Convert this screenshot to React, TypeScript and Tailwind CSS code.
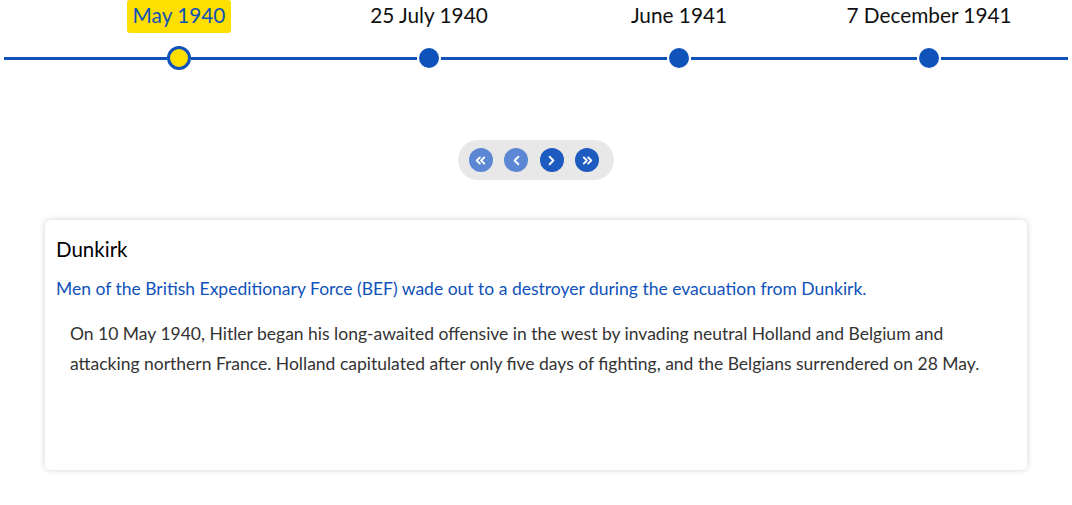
import { ChevronLeft, ChevronRight, ChevronsLeft, ChevronsRight } from "lucide-react";

const items = ["May 1940", "25 July 1940", "June 1941", "7 December 1941"];

export default function App() {
  return (
    <div className="w-[1072px] h-[505px] bg-white font-['Lato',sans-serif] text-[#222]">
      {/* timeline */}
      <div className="flex items-end pl-[4px] pr-[4px]">
        <div className="w-[50px] h-[3px] bg-[#0f52ba] mb-[21px]" />
        {items.map((label, i) => (
          <div key={label} className="w-[250px] flex flex-col items-center">
            <div
              className={`h-[33px] px-[6px] pb-[3px] rounded-[3px] flex items-center text-[20.8px] ${
                i === 0 ? "bg-[#ffdf00] text-[#0f52ba]" : "text-[#111]"
              }`}
            >
              {label}
            </div>
            <div className="w-full h-[48px] pt-[2px] flex items-center">
              <div className="flex-1 h-[3px] bg-[#0f52ba]" />
              {i === 0 ? (
                <div className="w-[24px] h-[24px] rounded-full bg-[#ffdf00] border-[3px] border-[#0f52ba]" />
              ) : (
                <div className="w-[20px] h-[20px] rounded-full bg-[#0f52ba] mx-[2px]" />
              )}
              <div className="flex-1 h-[3px] bg-[#0f52ba]" />
            </div>
          </div>
        ))}
        <div className="flex-1 h-[3px] bg-[#0f52ba] mb-[21px]" />
      </div>

      {/* controls */}
      <div className="flex justify-center mt-[59px]">
        <div className="flex items-center gap-[11.5px] h-[40px] pl-[11px] pr-[15px] rounded-full bg-[#e8e8e8]">
          <button className="w-[24px] h-[24px] rounded-full bg-[#5b87d4] text-white flex items-center justify-center">
            <ChevronsLeft size={15} strokeWidth={3} />
          </button>
          <button className="w-[24px] h-[24px] rounded-full bg-[#5b87d4] text-white flex items-center justify-center">
            <ChevronLeft size={15} strokeWidth={3} />
          </button>
          <button className="w-[24px] h-[24px] rounded-full bg-[#1d5bc0] text-white flex items-center justify-center">
            <ChevronRight size={15} strokeWidth={3} />
          </button>
          <button className="w-[24px] h-[24px] rounded-full bg-[#1d5bc0] text-white flex items-center justify-center">
            <ChevronsRight size={15} strokeWidth={3} />
          </button>
        </div>
      </div>

      {/* card */}
      <div className="mx-[45px] w-[982px] mt-[40px] h-[250px] rounded-[6px] bg-white shadow-[0_0_6px_rgba(0,0,0,0.18)] pt-[16px] px-[11px]">
        <h1 className="text-[20.5px] leading-[26px] text-black">Dunkirk</h1>
        <p className="mt-[15px] text-[17.5px] leading-[24px] text-[#0f52ba]">
          Men of the British Expeditionary Force (BEF) wade out to a destroyer during the evacuation from Dunkirk.
        </p>
        <p className="mt-[18px] pl-[14px] pr-[18px] text-[17.5px] leading-[30px] text-[#333]">
          On 10 May 1940, Hitler began his long-awaited offensive in the west by invading neutral Holland and Belgium and attacking northern France. Holland capitulated after only five days of fighting, and the Belgians surrendered on 28 May.
        </p>
      </div>
    </div>
  );
}
